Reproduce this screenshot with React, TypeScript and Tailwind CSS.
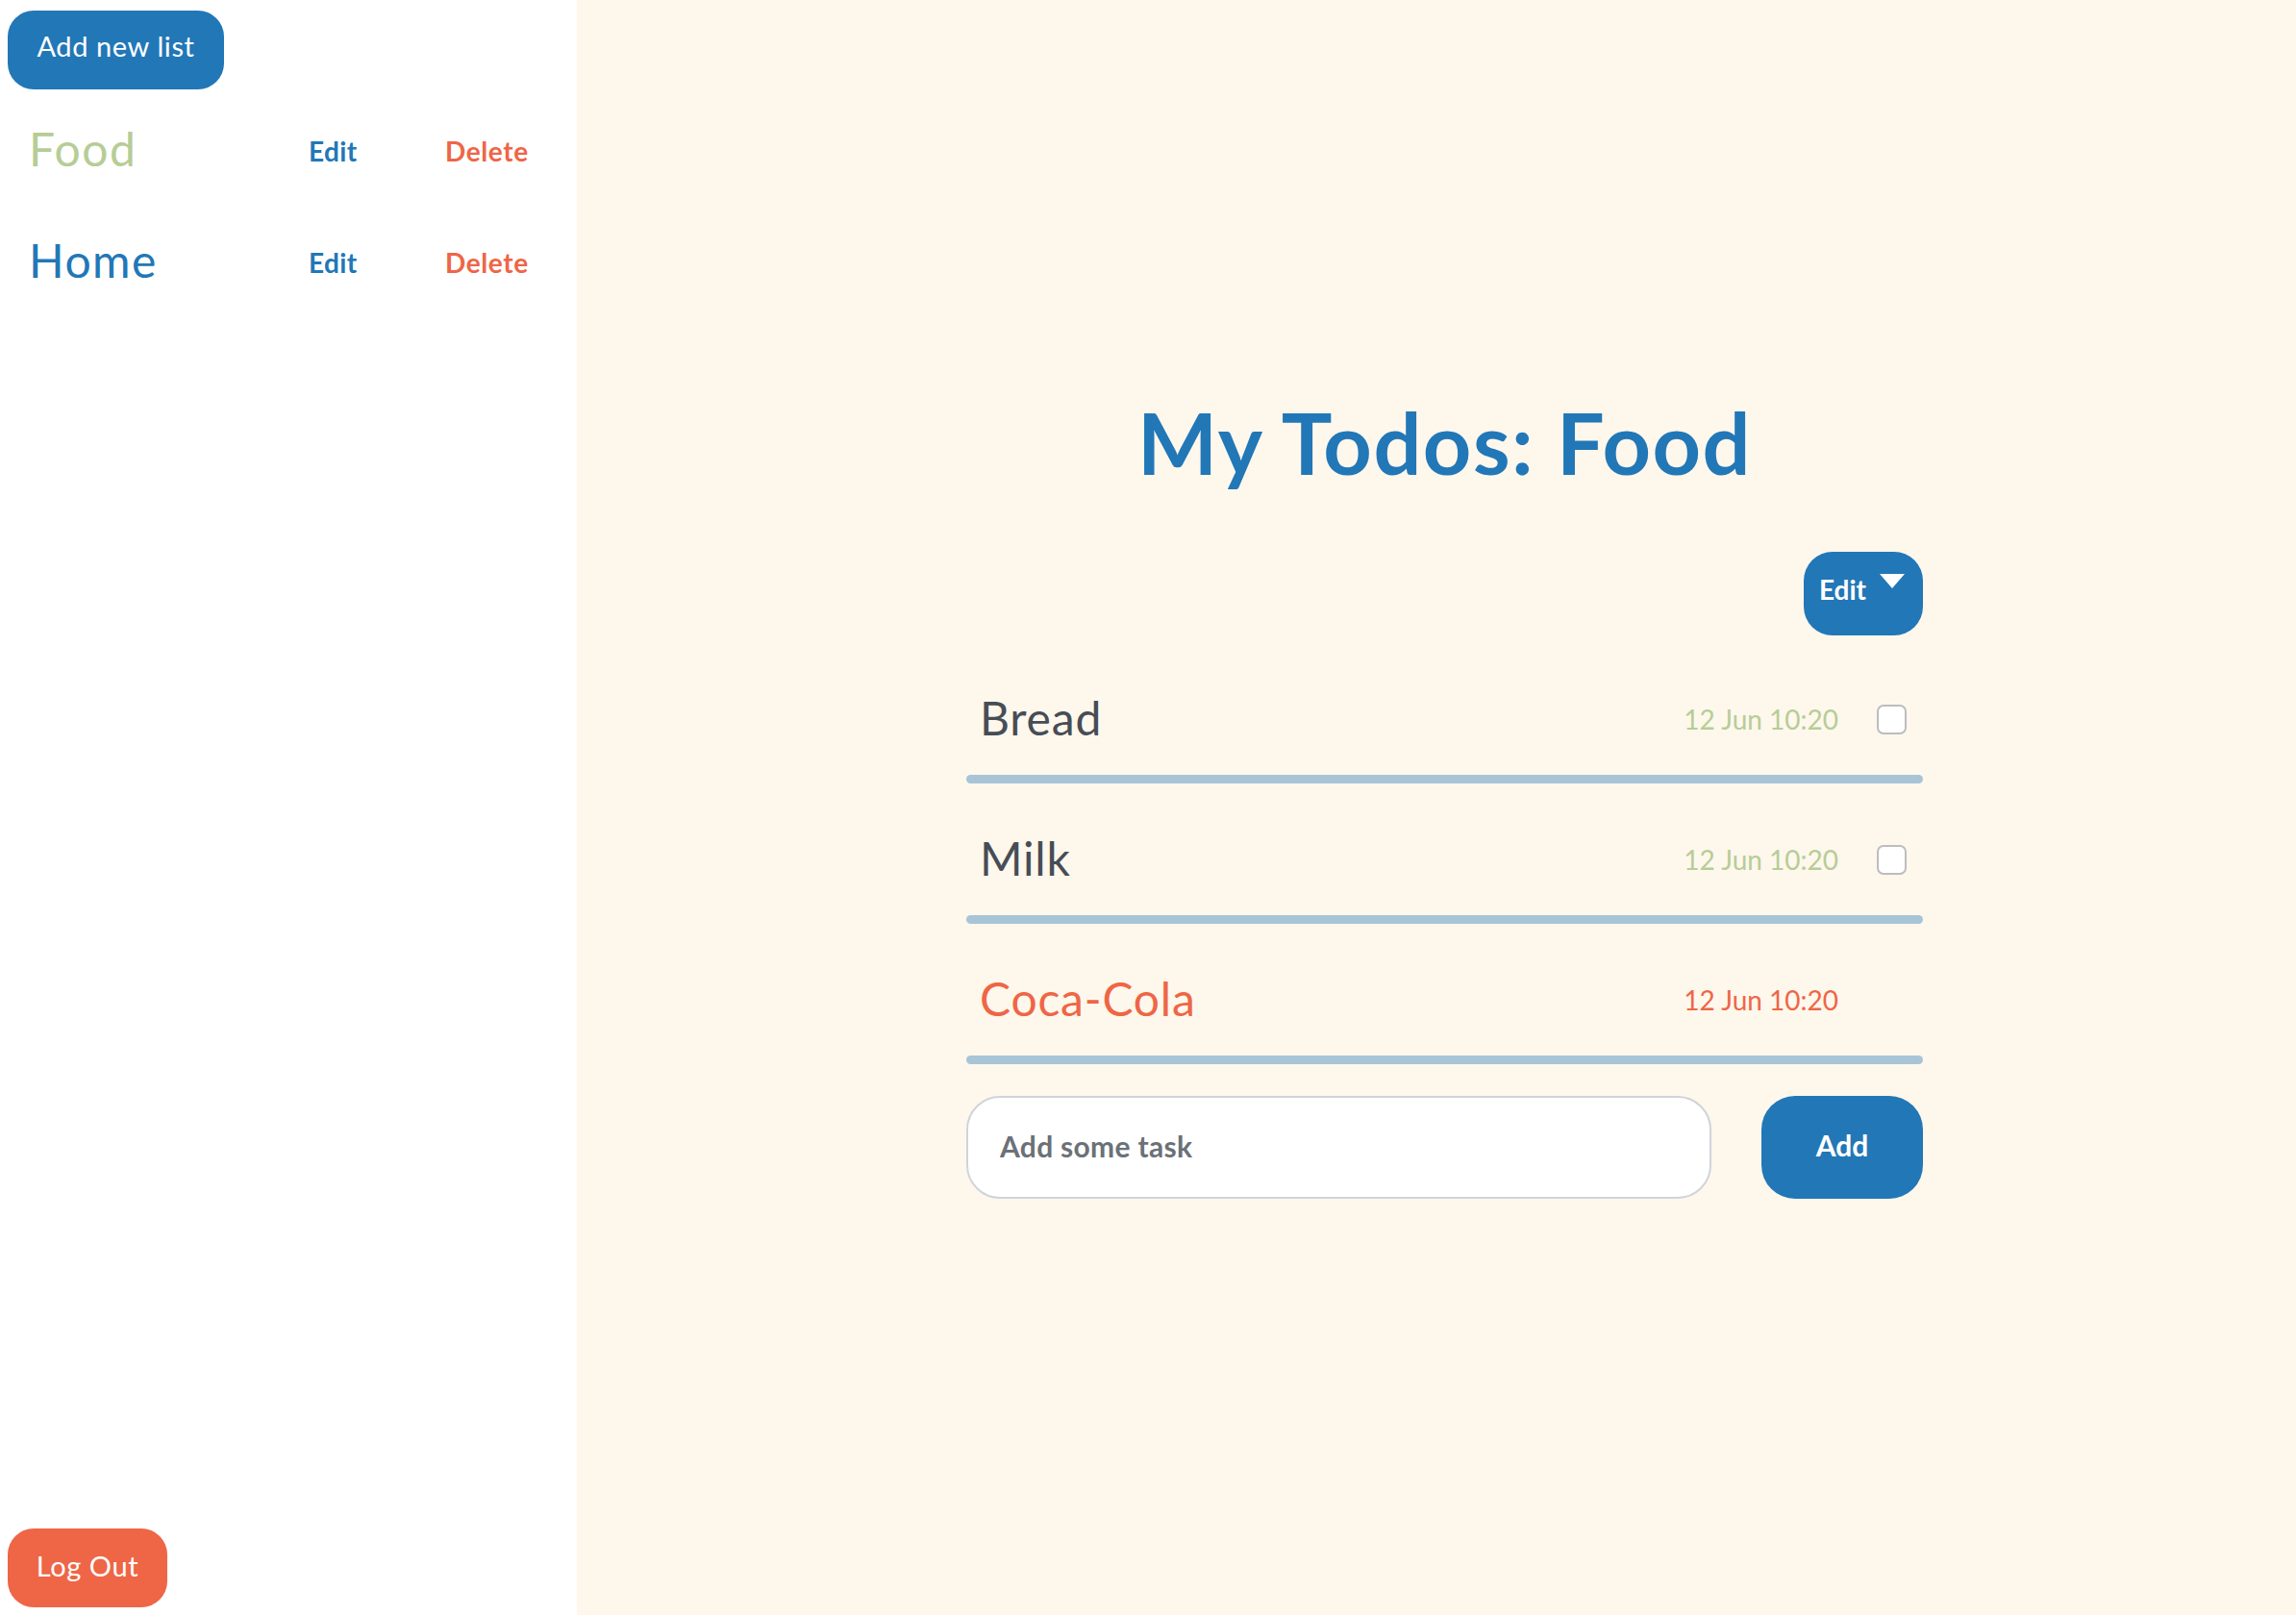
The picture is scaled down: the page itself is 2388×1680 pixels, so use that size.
import React, { useState } from "react";

interface Todo {
  id: number;
  title: string;
  date: string;
  overdue?: boolean;
}

interface TodoList {
  id: number;
  name: string;
}

export default function App() {
  // listas de la barra lateral, la primera es la activa
  const [lists] = useState<TodoList[]>([
    { id: 1, name: "Food" },
    { id: 2, name: "Home" },
  ]);
  const [activeId] = useState(1);
  const [todos] = useState<Todo[]>([
    { id: 1, title: "Bread", date: "12 Jun 10:20" },
    { id: 2, title: "Milk", date: "12 Jun 10:20" },
    { id: 3, title: "Coca-Cola", date: "12 Jun 10:20", overdue: true },
  ]);
  const [task, setTask] = useState("");

  return (
    <div className="flex h-[1680px] w-full font-['Lato',sans-serif]">
      {/* barra lateral */}
      <aside className="flex w-[600px] shrink-0 flex-col justify-between bg-white">
        <div>
          <button className="ml-[8px] mt-[11px] h-[82px] w-[225px] rounded-[27px] bg-[#2277b7] pb-[8px] text-[29px] tracking-[0.6px] text-white">
            Add new list
          </button>
          <div className="mt-[6px]">
            {lists.map((list) => (
              <div
                key={list.id}
                className="grid h-[116px] grid-cols-[291px_142px_1fr] items-center pl-[30px]"
              >
                <span
                  className={
                    list.id === activeId
                      ? "pb-[4px] text-[48px] tracking-[1.5px] text-[#b6cd96]"
                      : "pb-[4px] text-[48px] tracking-[1.5px] text-[#2277b7]"
                  }
                >
                  {list.name}
                </span>
                <button className="justify-self-start text-[28px] font-bold tracking-[0.4px] text-[#2277b7]">
                  Edit
                </button>
                <button className="justify-self-start text-[28px] font-bold tracking-[0.6px] text-[#ee6646]">
                  Delete
                </button>
              </div>
            ))}
          </div>
        </div>
        <button className="mb-[8px] ml-[8px] h-[82px] w-[166px] rounded-[27px] bg-[#ee6646] pb-[5px] text-[29px] tracking-[0.6px] text-white">
          Log Out
        </button>
      </aside>

      {/* contenido principal */}
      <main className="flex flex-1 justify-center bg-[#fef7ec] pl-[17px]">
        <div className="flex w-[995px] flex-col">
          <h1 className="mt-[416px] text-center text-[88px] font-bold leading-none tracking-[1.5px] text-[#2277b7]">
            My Todos: Food
          </h1>

          <div className="mt-[70px] flex justify-end">
            <button className="flex h-[87px] w-[124px] items-start rounded-[30px] bg-[#2277b7] pl-[16px] text-white">
              <span className="mt-[22px] text-[28px] font-bold leading-[34px]">Edit</span>
              <svg
                width="26"
                height="15"
                viewBox="0 0 26 15"
                className="ml-[14px] mt-[23px]"
              >
                <polygon points="0,0 26,0 13,15" fill="#ffffff" />
              </svg>
            </button>
          </div>

          <ul className="mt-[8px]">
            {todos.map((todo) => (
              <li key={todo.id} className="mt-[21px]">
                <div className="flex h-[116px] items-center pl-[14px] pr-[17px]">
                  <span
                    className={
                      todo.overdue
                        ? "flex-1 pb-[2px] text-[48px] tracking-[0.8px] text-[#ee6646]"
                        : "flex-1 pb-[2px] text-[48px] tracking-[0.8px] text-[#474d55]"
                    }
                  >
                    {todo.title}
                  </span>
                  <span
                    className={
                      todo.overdue
                        ? "text-[28px] text-[#ee6646]"
                        : "text-[28px] text-[#b6cd96]"
                    }
                  >
                    {todo.date}
                  </span>
                  {todo.overdue ? (
                    <span className="ml-[40px] h-[31px] w-[31px]" />
                  ) : (
                    <input
                      type="checkbox"
                      className="ml-[40px] h-[31px] w-[31px] appearance-none rounded-[7px] border-2 border-[#bdbdbd] bg-white"
                    />
                  )}
                </div>
                <div className="h-[9px] rounded-full bg-[#a7c5d7]" />
              </li>
            ))}
          </ul>

          <div className="mt-[33px] flex gap-[52px]">
            <input
              type="text"
              placeholder="Add some task"
              value={task}
              onChange={(e) => setTask(e.target.value)}
              className="h-[107px] flex-1 rounded-[35px] border-2 border-[#cfd4da] bg-white pb-[4px] pl-[33px] text-[30px] font-bold tracking-[0.3px] text-[#474d55] outline-none placeholder:text-[#6b7177]"
            />
            <button className="h-[107px] w-[168px] rounded-[35px] bg-[#2277b7] pb-[4px] text-[30px] font-bold text-white">
              Add
            </button>
          </div>
        </div>
      </main>
    </div>
  );
}
